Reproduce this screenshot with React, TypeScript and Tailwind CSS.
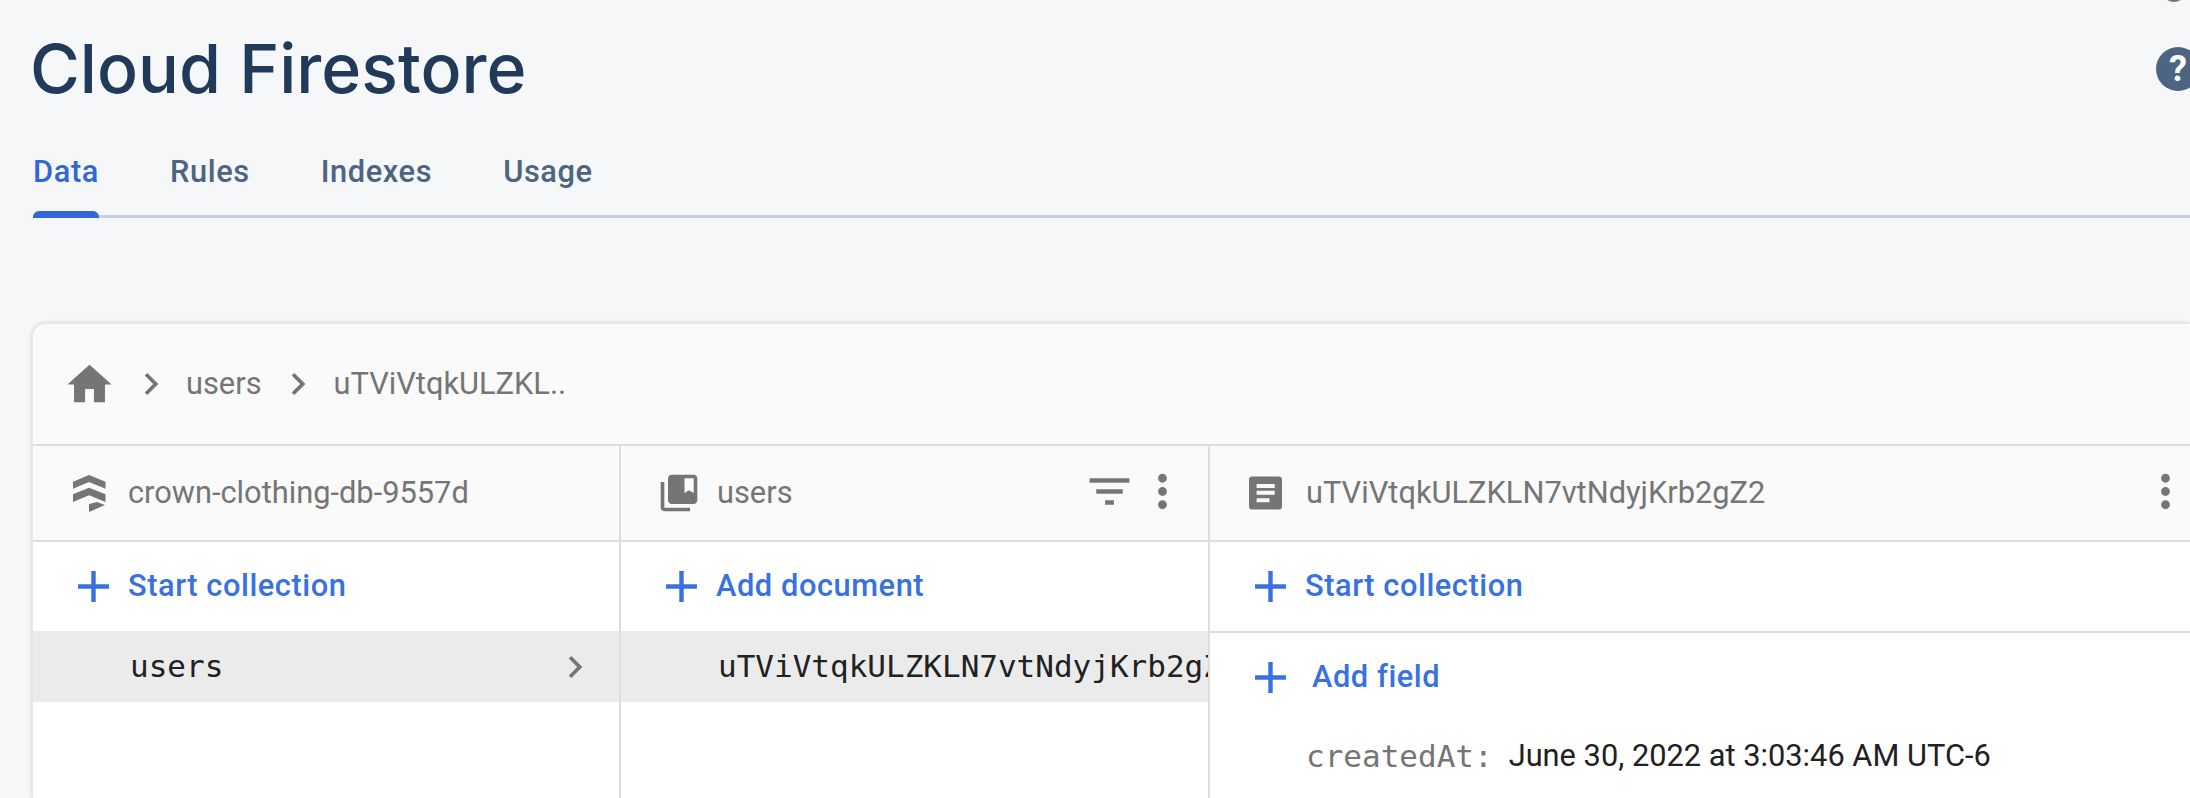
const P = {
  home: "M10 20v-6h4v6h5v-8h3L12 3 2 12h3v8z",
  chev: "M10 6L8.59 7.41 13.17 12l-4.58 4.59L10 18l6-6z",
  filter: "M10 18h4v-2h-4v2zM3 6v2h18V6H3zm3 7h12v-2H6v2z",
  dots: "M12 8c1.1 0 2-.9 2-2s-.9-2-2-2-2 .9-2 2 .9 2 2 2zm0 2c-1.1 0-2 .9-2 2s.9 2 2 2 2-.9 2-2-.9-2-2-2zm0 6c-1.1 0-2 .9-2 2s.9 2 2 2 2-.9 2-2-.9-2-2-2z",
  add: "M19 13h-6v6h-2v-6H5v-2h6V5h2v6h6v2z",
  coll: "M4 6H2v14c0 1.1.9 2 2 2h14v-2H4V6zM20 2H8c-1.1 0-2 .9-2 2v12c0 1.1.9 2 2 2h12c1.1 0 2-.9 2-2V4c0-1.1-.9-2-2-2zm0 10l-2.5-1.5L15 12V4h5v8z",
};

function Ic({ d, className }: { d: string; className: string }) {
  return (
    <svg viewBox="0 0 24 24" fill="currentColor" className={`shrink-0 ${className}`}>
      <path d={d} />
    </svg>
  );
}

function Stack() {
  return (
    <svg viewBox="0 0 33 37" fill="currentColor" className="h-[37px] w-[33px] shrink-0">
      <polygon points="16,0 32.5,6.7 32.5,13.7 16,7 0,13.7 0,6.7" />
      <polygon points="16,12.7 32.5,19.3 32.5,27 16,20.3 0,27 0,19.3" />
      <polygon points="16,29 24,27 32,30 16,37" />
    </svg>
  );
}

function Doc() {
  return (
    <svg viewBox="0 0 100 100" fill="currentColor" className="h-[34px] w-[33px] shrink-0">
      <path
        fillRule="evenodd"
        d="M10 0H90A10 10 0 0 1 100 10V90A10 10 0 0 1 90 100H10A10 10 0 0 1 0 90V10A10 10 0 0 1 10 0ZM23 23V35H78V23ZM23 43V55H78V43ZM23 66V78H62V66Z"
      />
    </svg>
  );
}

const action = "font-['Roboto',sans-serif] text-[30.8px] font-medium tracking-[0.55px] text-[#3871e0] leading-none";
const head = "font-['Roboto',sans-serif] text-[30.8px] text-[#757575] leading-none";
const mono = "font-['DejaVu_Sans_Mono',monospace] text-[31px] leading-none";

function ColHead({ icon, label, extra, className }: { icon: React.ReactNode; label: string; extra?: React.ReactNode; className: string }) {
  return (
    <div className={`flex h-[96px] items-center border-b-2 border-[#dedede] bg-[#fafafa] ${className}`}>
      {icon}
      <span className={head}>{label}</span>
      {extra}
    </div>
  );
}

export default function App() {
  return (
    <div className="relative flex h-[798px] w-[2190px] flex-col overflow-hidden bg-[#f6f7f9]">
      <div className="absolute right-[4px] top-[-22px] h-[24px] w-[24px] rounded-full bg-[#8a6d63]" />

      <div className="flex h-[136px] shrink-0 items-center justify-between pl-[30px]">
        <h1 className="font-['Inter',sans-serif] text-[68px] font-medium leading-none text-[#223a59]">Cloud Firestore</h1>
        <div className="mr-[-10px] mt-[2px] flex h-[44px] w-[44px] shrink-0 items-center justify-center rounded-full bg-[#4d6483] font-['Roboto',sans-serif] text-[36px] font-bold leading-none text-white">?</div>
      </div>

      <div className="ml-[33px] flex h-[82px] shrink-0 items-start gap-[71px] border-b-[3px] border-[#c5d0e0] font-['Roboto',sans-serif] text-[30.8px] font-medium leading-none tracking-[0.6px] text-[#4d6483]">
        <div className="relative h-[79px] pt-[21px] text-[#3367d6]">
          Data
          <div className="absolute bottom-[-3px] left-0 right-0 h-[7px] rounded-t-[6px] bg-[#3367d6]" />
        </div>
        <div className="pt-[21px]">Rules</div>
        <div className="pt-[21px]">Indexes</div>
        <div className="pt-[21px]">Usage</div>
      </div>

      <div className="ml-[32px] mt-[105px] flex flex-1 flex-col overflow-hidden rounded-tl-[14px] border-l border-t border-[#e8e8e8] bg-white shadow-[0_0_4px_rgba(0,0,0,0.18)]">
        <div className="flex h-[122px] shrink-0 items-center border-b-2 border-[#dedede] bg-[#fafafa] pl-[30px] text-[#757575]">
          <Ic d={P.home} className="h-[53px] w-[53px]" />
          <Ic d={P.chev} className="ml-[13px] h-[44px] w-[44px]" />
          <span className={`${head} ml-[13px]`}>users</span>
          <Ic d={P.chev} className="ml-[14px] h-[44px] w-[44px]" />
          <span className={`${head} ml-[14px]`}>uTViVtqkULZKL..</span>
        </div>

        <div className="flex flex-1">
          <div className="flex w-[588px] shrink-0 flex-col border-r-2 border-[#dedede]">
            <ColHead className="pl-[40px]" icon={<span className="mr-[22px] text-[#757575]"><Stack /></span>} label="crown-clothing-db-9557d" />
            <div className="flex h-[89px] items-center pl-[34px]">
              <Ic d={P.add} className="h-[53px] w-[53px] text-[#3871e0]" />
              <span className={`${action} ml-[8px]`}>Start collection</span>
            </div>
            <div className="flex h-[71px] items-center justify-between bg-[#ebebeb] pl-[97px] pr-[22px]">
              <span className={`${mono} text-[#212121]`}>users</span>
              <Ic d={P.chev} className="h-[44px] w-[44px] text-[#757575]" />
            </div>
          </div>

          <div className="flex w-[589px] shrink-0 flex-col border-r-2 border-[#dedede]">
            <ColHead
              className="pl-[36px] pr-[19px]"
              icon={<Ic d={P.coll} className="mr-[16px] h-[44px] w-[44px] text-[#757575]" />}
              label="users"
              extra={
                <div className="-mt-[4px] ml-auto flex items-center text-[#757575]">
                  <Ic d={P.filter} className="h-[53px] w-[53px]" />
                  <Ic d={P.dots} className="h-[53px] w-[53px]" />
                </div>
              }
            />
            <div className="flex h-[89px] items-center pl-[34px]">
              <Ic d={P.add} className="h-[53px] w-[53px] text-[#3871e0]" />
              <span className={`${action} ml-[8px]`}>Add document</span>
            </div>
            <div className="flex h-[71px] items-center overflow-hidden whitespace-nowrap bg-[#ebebeb] pl-[97px]">
              <span className={`${mono} text-[#212121]`}>uTViVtqkULZKLN7vtNdyjKrb2gZ2</span>
            </div>
          </div>

          <div className="flex flex-1 flex-col">
            <ColHead
              className="pl-[39px]"
              icon={<span className="mr-[24px] text-[#757575]"><Doc /></span>}
              label="uTViVtqkULZKLN7vtNdyjKrb2gZ2"
              extra={<Ic d={P.dots} className="-mr-[2px] -mt-[4px] ml-auto h-[53px] w-[53px] text-[#757575]" />}
            />
            <div className="flex h-[91px] items-center border-b-2 border-[#dedede] pl-[34px]">
              <Ic d={P.add} className="h-[53px] w-[53px] text-[#3871e0]" />
              <span className={`${action} ml-[8px]`}>Start collection</span>
            </div>
            <div className="flex h-[88px] items-center pl-[34px]">
              <Ic d={P.add} className="h-[53px] w-[53px] text-[#3871e0]" />
              <span className={`${action} ml-[15px]`}>Add field</span>
            </div>
            <div className="flex h-[70px] items-center pl-[96px]">
              <span className={`${mono} text-[#757575]`}>createdAt:</span>
              <span className="ml-[16px] font-['Roboto',sans-serif] text-[30.8px] leading-none text-[#212121]">June 30, 2022 at 3:03:46 AM UTC-6</span>
            </div>
          </div>
        </div>
      </div>
    </div>
  );
}
